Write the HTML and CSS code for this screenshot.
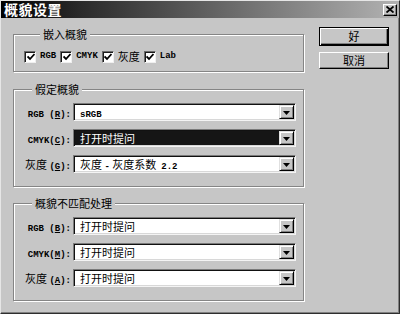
FILE: index.html
```html
<!DOCTYPE html>
<html lang="zh">
<head>
<meta charset="utf-8">
<title>概貌设置</title>
<link rel="stylesheet" href="styles.css">
</head>
<body>
<div class="dialog">
  <div class="titlebar">
    <span class="title">概貌设置</span>
    <span class="close"><svg width="8" height="7" viewBox="0 0 8 7"><path d="M0.5 0.5 L7.5 6.5 M7.5 0.5 L0.5 6.5" stroke="#000" stroke-width="1.8" fill="none"/></svg></span>
  </div>
  <div class="body">
    <div class="groups">
      <fieldset class="group g1">
        <legend>嵌入概貌</legend>
        <div class="checks">
          <span class="chk"><span class="box"><svg width="8" height="8" viewBox="0 0 8 8"><path d="M0.5 3.5 L3 6 L7.5 1" stroke="#000" stroke-width="1.8" fill="none"/></svg></span><span class="en">RGB</span></span>
          <span class="chk"><span class="box"><svg width="8" height="8" viewBox="0 0 8 8"><path d="M0.5 3.5 L3 6 L7.5 1" stroke="#000" stroke-width="1.8" fill="none"/></svg></span><span class="en">CMYK</span></span>
          <span class="chk"><span class="box"><svg width="8" height="8" viewBox="0 0 8 8"><path d="M0.5 3.5 L3 6 L7.5 1" stroke="#000" stroke-width="1.8" fill="none"/></svg></span><span class="cjk">灰度</span></span>
          <span class="chk"><span class="box"><svg width="8" height="8" viewBox="0 0 8 8"><path d="M0.5 3.5 L3 6 L7.5 1" stroke="#000" stroke-width="1.8" fill="none"/></svg></span><span class="en">Lab</span></span>
        </div>
      </fieldset>
      <fieldset class="group g2">
        <legend>假定概貌</legend>
        <div class="rows">
          <span class="lbl"><span class="en">RGB (<u>R</u>):</span></span>
          <div class="combo"><span class="val"><span class="en">sRGB</span></span><span class="drop"><svg width="7" height="4" viewBox="0 0 7 4"><path d="M0 0 H7 L3.5 4 Z" fill="#000"/></svg></span></div>
          <span class="lbl"><span class="en">CMYK(<u>C</u>):</span></span>
          <div class="combo sel"><span class="val">打开时提问</span><span class="drop"><svg width="7" height="4" viewBox="0 0 7 4"><path d="M0 0 H7 L3.5 4 Z" fill="#000"/></svg></span></div>
          <span class="lbl">灰度 <span class="en">(<u>G</u>):</span></span>
          <div class="combo"><span class="val">灰度 <span class="en">-</span> 灰度系数  <span class="en">2.2</span></span><span class="drop"><svg width="7" height="4" viewBox="0 0 7 4"><path d="M0 0 H7 L3.5 4 Z" fill="#000"/></svg></span></div>
        </div>
      </fieldset>
      <fieldset class="group g3">
        <legend>概貌不匹配处理</legend>
        <div class="rows">
          <span class="lbl"><span class="en">RGB (<u>B</u>):</span></span>
          <div class="combo"><span class="val">打开时提问</span><span class="drop"><svg width="7" height="4" viewBox="0 0 7 4"><path d="M0 0 H7 L3.5 4 Z" fill="#000"/></svg></span></div>
          <span class="lbl"><span class="en">CMYK(<u>M</u>):</span></span>
          <div class="combo"><span class="val">打开时提问</span><span class="drop"><svg width="7" height="4" viewBox="0 0 7 4"><path d="M0 0 H7 L3.5 4 Z" fill="#000"/></svg></span></div>
          <span class="lbl">灰度 <span class="en">(<u>A</u>):</span></span>
          <div class="combo"><span class="val">打开时提问</span><span class="drop"><svg width="7" height="4" viewBox="0 0 7 4"><path d="M0 0 H7 L3.5 4 Z" fill="#000"/></svg></span></div>
        </div>
      </fieldset>
    </div>
    <div class="buttons">
      <span class="btn default">好</span>
      <span class="btn">取消</span>
    </div>
  </div>
</div>
</body>
</html>
```
FILE: styles.css
```css
* { box-sizing: border-box; }
html, body { margin: 0; padding: 0; }
body {
  width: 400px;
  height: 314px;
  background: #c6c6c6;
  font-family: "Noto Sans CJK SC", sans-serif;
  font-size: 11px;
  color: #000;
  overflow: hidden;
}
.dialog {
  width: 400px;
  height: 314px;
  background: #c6c6c6;
  border: 1px solid;
  border-color: #e6e6e6 #2e2e2e #2e2e2e #e6e6e6;
  box-shadow: inset -1px -1px 0 #808080;
  display: flex;
  flex-direction: column;
}
.titlebar {
  height: 17px;
  background: linear-gradient(to right, #000 0%, #2a2a2a 20%, #b2b2b2 100%);
  display: flex;
  align-items: center;
  justify-content: space-between;
  padding: 0 2px 0 3px;
}
.title {
  color: #fff;
  font-weight: 700;
  font-size: 14px;
  line-height: 17px;
  letter-spacing: 0.5px;
}
.close {
  width: 14px;
  height: 12px;
  background: #c6c6c6;
  border: 1px solid;
  border-color: #fff #000 #000 #fff;
  box-shadow: inset -1px -1px 0 #808080;
  display: flex;
  align-items: center;
  justify-content: center;
}
.close svg { display: block; }
.body {
  display: flex;
  gap: 15px;
  padding: 9px 0 0 12px;
}
.groups {
  width: 291px;
  display: flex;
  flex-direction: column;
}
.group {
  margin: 0;
  padding: 0;
  min-width: 0;
  border: 1px solid #858585;
  box-shadow: inset 1px 1px 0 #fff, 1px 1px 0 #fff;
}
.group legend {
  font-size: 11px;
  line-height: 14px;
  padding: 0 3px;
  margin-left: 16px;
  background: #c6c6c6;
}
.g1 { padding: 9px 0 8px 10px; }
.g2 { margin-top: 10px; padding: 7px 7px 13px 2px; }
.g3 { margin-top: 9px; padding: 7px 7px 13px 2px; }
.en {
  font-family: "Liberation Mono", monospace;
  font-size: 9px;
  font-weight: 700;
}
.checks {
  display: flex;
  align-items: center;
  gap: 4px;
  height: 13px;
}
.chk {
  display: flex;
  align-items: center;
  gap: 4px;
  line-height: 13px;
}
.box {
  width: 12px;
  height: 12px;
  background: #fff;
  border: 1px solid;
  border-color: #6a6a6a #f0f0f0 #f0f0f0 #6a6a6a;
  box-shadow: inset 1px 1px 0 #1a1a1a;
  display: flex;
  align-items: center;
  justify-content: center;
}
.box svg { display: block; margin: 1px 0 0 1px; }
.cjk { font-size: 11px; }
.rows {
  display: grid;
  grid-template-columns: 55px 223px;
  column-gap: 2px;
  row-gap: 8px;
}
.lbl {
  text-align: right;
  line-height: 18px;
  height: 18px;
  white-space: nowrap;
}
.combo {
  height: 18px;
  background: #fff;
  border: 1px solid;
  border-color: #7a7a7a #f4f4f4 #f4f4f4 #7a7a7a;
  box-shadow: inset 1px 1px 0 #111, inset -1px -1px 0 #d8d8d8;
  display: flex;
  padding: 1px;
}
.val {
  flex: 1;
  padding-left: 5px;
  line-height: 14px;
  white-space: pre;
}
.combo.sel .val {
  background: #151515;
  color: #fff;
}
.drop {
  width: 15px;
  height: 14px;
  background: #c6c6c6;
  border: 1px solid;
  border-color: #e0e0e0 #000 #000 #e0e0e0;
  box-shadow: inset 1px 1px 0 #fff, inset -1px -1px 0 #808080;
  display: flex;
  align-items: center;
  justify-content: center;
}
.drop svg { display: block; margin-top: 1px; }
.buttons {
  width: 70px;
  display: flex;
  flex-direction: column;
  gap: 6px;
}
.btn {
  height: 17px;
  background: #c6c6c6;
  border: 1px solid;
  border-color: #fff #000 #000 #fff;
  box-shadow: inset -1px -1px 0 #808080;
  display: flex;
  align-items: center;
  justify-content: center;
  font-size: 11px;
  line-height: 13px;
}
.btn.default {
  height: 19px;
  border: 1px solid #000;
  box-shadow: inset 1px 1px 0 #fff, inset -1px -1px 0 #000, inset -2px -2px 0 #808080;
}
```
